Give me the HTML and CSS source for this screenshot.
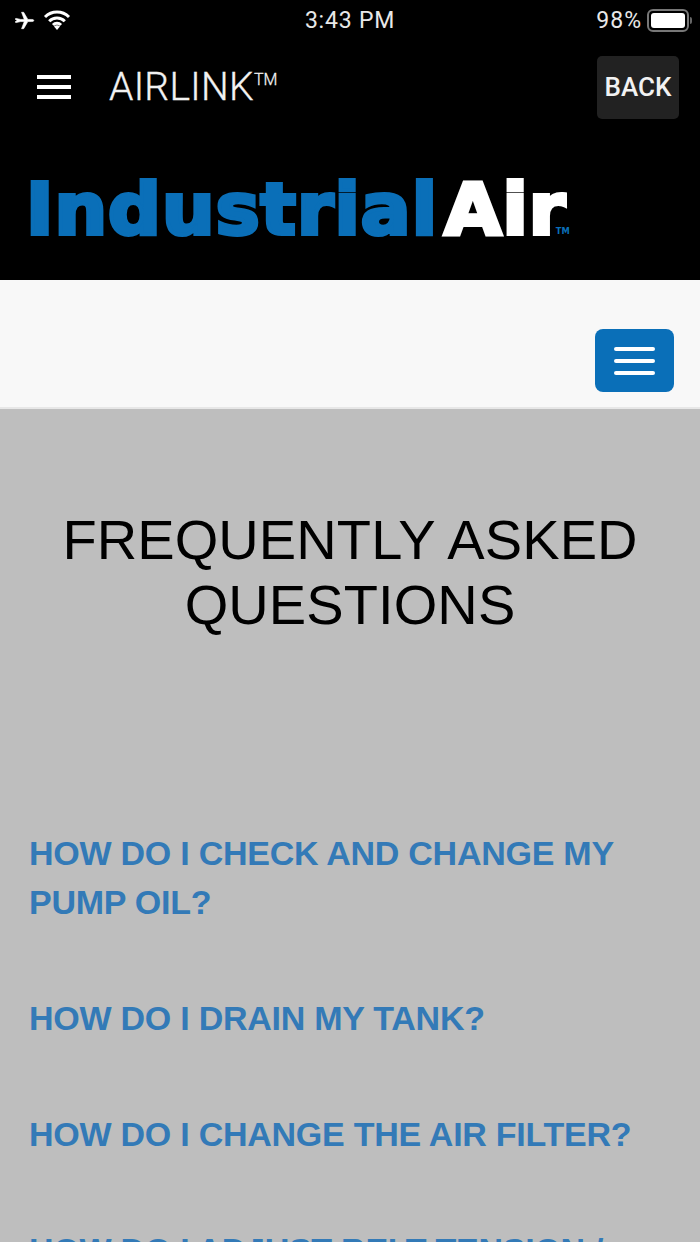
FILE: index.html
```html
<!DOCTYPE html>
<html lang="en">
<head>
    <meta charset="UTF-8">
    <meta name="viewport" content="width=device-width, initial-scale=1.0">
    <title>Airlink FAQ</title>
    <link rel="stylesheet" href="styles.css">
</head>
<body>
    <div class="screen">
        <div class="status-bar">
            <div class="status-left">
                <svg class="icon-plane" viewBox="0 0 20 20"><path d="M1 8.600 3 10 1 11.400 2 12l4.500-1 3.300 0L7.200 17.800 9.200 17.800 13.200 11 17 11C19.500 11 19.500 9 17 9L13.200 9 9.200 2.200 7.200 2.200 9.800 9 6.500 9 2 8z" fill="#fff" stroke="#fff" stroke-width="0.6"/></svg>
                <svg class="icon-wifi" viewBox="0 0 28 20"><path d="M2 7a17 17 0 0 1 24 0M6.200 11.200a11 11 0 0 1 15.600 0M10 15a5.500 5.500 0 0 1 8 0" fill="none" stroke="#fff" stroke-width="3"/><path d="M14 20l-3-3.500a4 4 0 0 1 6 0z" fill="#fff"/></svg>
            </div>
            <div class="status-time">3:43 PM</div>
            <div class="status-right">
                <span>98%</span>
                <div class="battery"><div class="battery-fill"></div></div>
                <div class="battery-tip"></div>
            </div>
        </div>

        <header class="app-header">
            <div class="app-title">
                <div class="burger">
                    <span></span>
                    <span></span>
                    <span></span>
                </div>
                <h1>AIRLINK<sup>TM</sup></h1>
            </div>
            <button class="back-button">BACK</button>
        </header>

        <div class="logo-row">
            <div class="logo"><span class="logo-blue">Industrial</span><span class="logo-white">Air</span><span class="logo-tm">TM</span></div>
        </div>

        <nav class="site-nav">
            <button class="nav-toggle">
                <span></span>
                <span></span>
                <span></span>
            </button>
        </nav>

        <main class="content">
            <h2>FREQUENTLY ASKED QUESTIONS</h2>
            <ul class="faq-list">
                <li><a href="#">HOW DO I CHECK AND CHANGE MY PUMP OIL?</a></li>
                <li><a href="#">HOW DO I DRAIN MY TANK?</a></li>
                <li><a href="#">HOW DO I CHANGE THE AIR FILTER?</a></li>
                <li><a href="#">HOW DO I ADJUST BELT TENSION / ALIGNMENT?</a></li>
            </ul>
        </main>
    </div>
</body>
</html>
```

FILE: styles.css
```css
* {
    box-sizing: border-box;
}

html, body {
    margin: 0;
    padding: 0;
    background: #fff;
    overflow: hidden;
}

.screen {
    width: 700px;
    height: 1242px;
    overflow: hidden;
    font-family: "Liberation Sans", Arial, sans-serif;
}

/* Status bar */
.status-bar {
    display: flex;
    align-items: center;
    justify-content: space-between;
    height: 40px;
    padding: 0 8px 0 14px;
    background: #000;
    color: #e8e8e8;
    font-family: Roboto, sans-serif;
    font-size: 23px;
    position: relative;
}

.status-left {
    display: flex;
    align-items: center;
    gap: 8px;
}

.icon-plane {
    width: 21px;
    height: 21px;
}

.icon-wifi {
    width: 28px;
    height: 20px;
}

.status-time {
    position: absolute;
    left: 0;
    right: 0;
    text-align: center;
    letter-spacing: 0.8px;
}

.status-right {
    display: flex;
    align-items: center;
    gap: 5px;
    letter-spacing: 1px;
}

.battery {
    width: 42px;
    height: 23px;
    border: 2px solid #777;
    border-radius: 6px;
    padding: 2px;
}

.battery-fill {
    height: 100%;
    background: #fff;
    border-radius: 3px;
}

.battery-tip {
    width: 2px;
    height: 7px;
    margin-left: -4px;
    background: #666;
    border-radius: 0 2px 2px 0;
}

/* Title row */
.app-header {
    display: flex;
    align-items: center;
    justify-content: space-between;
    height: 94px;
    padding: 0 21px 0 37px;
    background: #000;
}

.app-title {
    display: flex;
    align-items: center;
    gap: 38px;
}

.burger span {
    display: block;
    width: 34px;
    height: 4px;
    margin: 6px 0;
    background: #fff;
}

.app-title h1 {
    margin: 0;
    color: #f2f2f2;
    font-family: Roboto, sans-serif;
    font-size: 39px;
    font-weight: 300;
    letter-spacing: 0.3px;
    -webkit-text-stroke: 0.3px currentColor;
}

.app-title sup {
    font-size: 16px;
    vertical-align: 15px;
    line-height: 0;
    letter-spacing: 0;
}

.back-button {
    width: 82px;
    height: 63px;
    border: none;
    border-radius: 5px;
    background: #222;
    color: #f2f2f2;
    font-family: Roboto, sans-serif;
    font-size: 26px;
    font-weight: 500;
    padding: 0;
}

/* Logo */
.logo-row {
    height: 146px;
    padding: 36px 0 0 26px;
    background: #000;
}

.logo {
    display: flex;
    align-items: baseline;
    font-family: "DejaVu Sans", sans-serif;
    font-size: 71px;
    font-weight: 700;
    line-height: 80px;
    letter-spacing: 1px;
    -webkit-text-stroke: 4px currentColor;
    transform: scaleX(1.04);
    transform-origin: left center;
}

.logo-blue {
    color: #0a6fb8;
}

.logo-white {
    color: #fff;
    margin-left: 6px;
}

.logo-tm {
    color: #0a6fb8;
    font-size: 8px;
    letter-spacing: 0;
    margin-left: -10px;
    -webkit-text-stroke: 0;
}

/* Site nav */
.site-nav {
    display: flex;
    justify-content: flex-end;
    height: 129px;
    padding: 49px 26px 0 0;
    background: #f8f8f8;
    border-bottom: 2px solid #e7e7e7;
}

.nav-toggle {
    display: flex;
    flex-direction: column;
    justify-content: center;
    align-items: center;
    gap: 8px;
    width: 79px;
    height: 63px;
    padding: 0;
    border: none;
    border-radius: 8px;
    background: #0a6fb8;
}

.nav-toggle span {
    display: block;
    width: 41px;
    height: 4px;
    border-radius: 2px;
    background: #fff;
}

/* Content */
.content {
    padding: 98px 29px 0;
    background: #bebebe;
    height: 900px;
}

.content h2 {
    margin: 0 0 192px;
    color: #000;
    font-size: 56px;
    font-weight: 400;
    line-height: 65px;
    text-align: center;
    letter-spacing: 0.1px;
}

.faq-list {
    margin: 0;
    padding: 0;
    list-style: none;
}

.faq-list li {
    margin-bottom: 67px;
}

.faq-list a {
    color: #337ab7;
    font-size: 34px;
    font-weight: 700;
    line-height: 49px;
    letter-spacing: -0.25px;
    text-decoration: none;
}
```
